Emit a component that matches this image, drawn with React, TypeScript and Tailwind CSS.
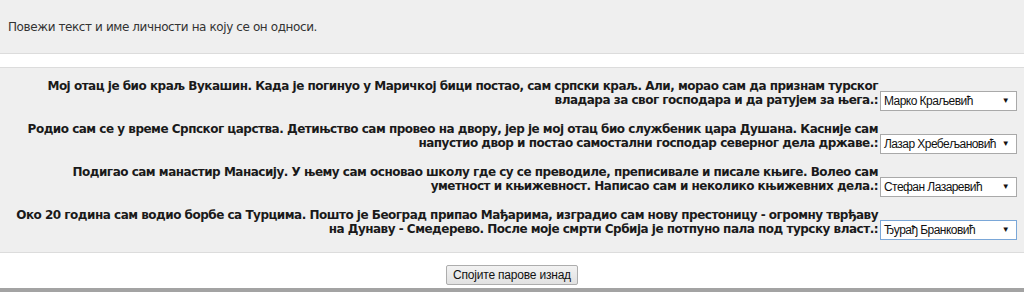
import React from "react";

const rows: { lines: string[]; value: string; focused?: boolean }[] = [
  {
    lines: [
      "Мој отац је био краљ Вукашин. Када је погинуо у Маричкој бици постао, сам српски краљ. Али, морао сам да признам турског",
      "владара за свог господара и да ратујем за њега.:",
    ],
    value: "Марко Краљевић",
  },
  {
    lines: [
      "Родио сам се у време Српског царства. Детињство сам провео на двору, јер је мој отац био службеник цара Душана. Касније сам",
      "напустио двор и постао самостални господар северног дела државе.:",
    ],
    value: "Лазар Хребељановић",
  },
  {
    lines: [
      "Подигао сам манастир Манасију. У њему сам основао школу где су се преводиле, преписивале и писале књиге. Волео сам",
      "уметност и књижевност. Написао сам и неколико књижевних дела.:",
    ],
    value: "Стефан Лазаревић",
  },
  {
    lines: [
      "Око 20 година сам водио борбе са Турцима. Пошто је Београд припао Мађарима, изградио сам нову престоницу - огромну тврђаву",
      "на Дунаву - Смедерево. После моје смрти Србија је потпуно пала под турску власт.:",
    ],
    value: "Ђурађ Бранковић",
    focused: true,
  },
];

function FakeSelect({ value, focused }: { value: string; focused?: boolean }) {
  return (
    <div
      className={`flex h-[20px] w-[137px] shrink-0 items-center justify-between bg-white pl-[3px] pr-[7px] text-[12px] tracking-[-0.55px] text-[#111] [font-family:'Liberation_Sans',Arial,sans-serif] border ${
        focused ? "border-[#7aa7d8]" : "border-[#a9a9a9]"
      }`}
    >
      <span className="whitespace-nowrap leading-none">{value}</span>
      <span className="text-[8px] leading-none">▼</span>
    </div>
  );
}

export default function App() {
  return (
    <div className="w-[1024px] h-[292px] overflow-hidden bg-white [font-family:'DejaVu_Sans',Verdana,sans-serif]">
      <div className="flex h-[54px] items-center border-b border-[#dcdcdc] bg-[#efefef] px-[8px] text-[12px] tracking-[-0.4px] text-[#333]">
        Повежи текст и име личности на коју се он односи.
      </div>
      <div className="h-[14px] border-b border-[#dcdcdc] bg-white" />
      <div className="flex flex-col gap-[15px] border-b border-[#dcdcdc] bg-[#efefef] pb-[16px] pl-[8px] pr-[7px] pt-[11px]">
        {rows.map((r, i) => (
          <div key={i} className="flex items-end justify-end gap-[2px]">
            <div className="text-right text-[12px] font-bold leading-[14px] text-[#1a1a1a] tracking-[-0.5px]">
              {r.lines.map((l, j) => (
                <div key={j} className="whitespace-nowrap">
                  {l}
                </div>
              ))}
            </div>
            <div className="mb-[-4px]">
              <FakeSelect value={r.value} focused={r.focused} />
            </div>
          </div>
        ))}
      </div>
      <div className="flex h-[35px] items-start justify-center bg-white pt-[12px]">
        <button className="h-[20px] rounded-[2px] border border-[#adadad] bg-gradient-to-b from-[#f2f2f2] to-[#e1e1e1] px-[6px] text-[12px] tracking-[-0.2px] leading-none text-[#111] [font-family:'Liberation_Sans',Arial,sans-serif]">
          Спојите парове изнад
        </button>
      </div>
      <div className="h-[4px] bg-[#a3a3a3]" />
    </div>
  );
}
